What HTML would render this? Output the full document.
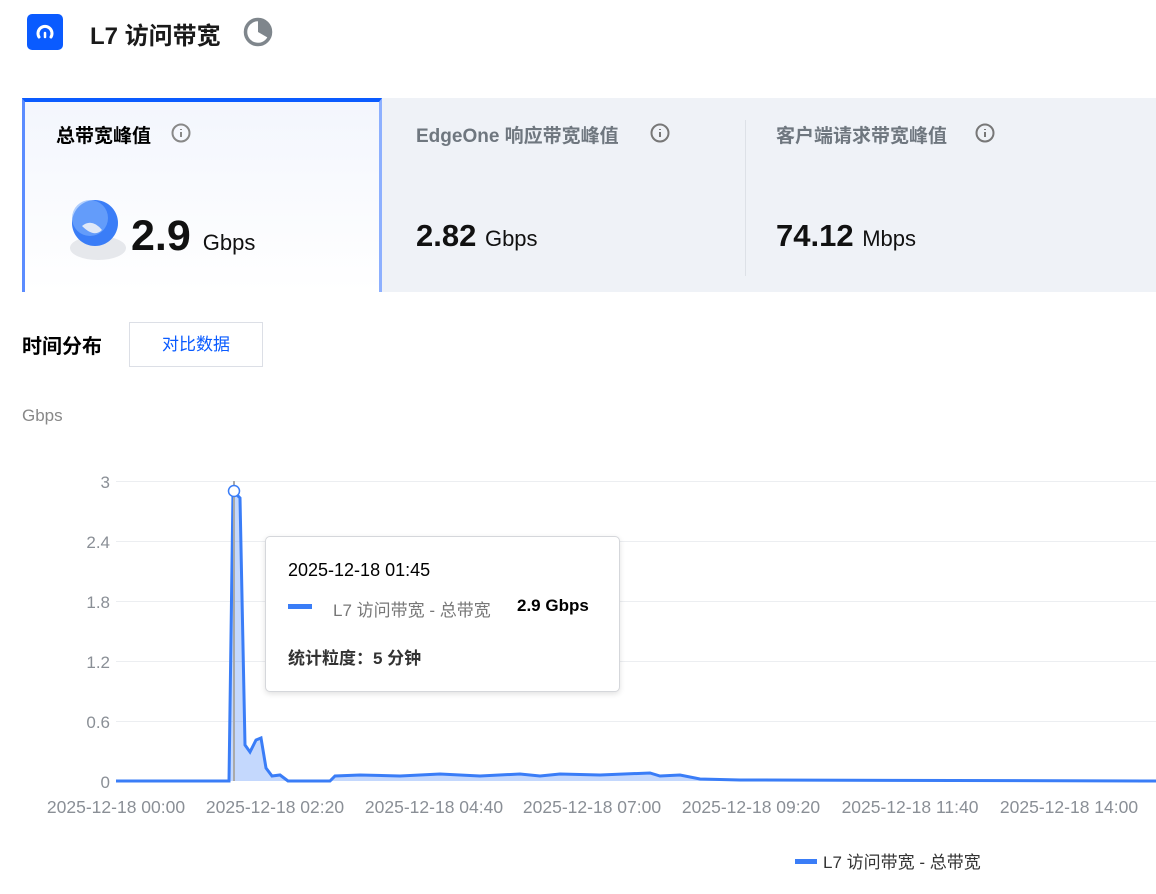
<!DOCTYPE html>
<html><head><meta charset="utf-8"><style>
body{margin:0;width:1156px;height:894px;background:#fff;font-family:"Liberation Sans","Noto Sans CJK SC",sans-serif;position:relative;overflow:hidden;color:#000}
.a{position:absolute}
</style></head><body>
<div class="a" style="left:27px;top:14px;width:36px;height:36px;background:#0a5bff;border-radius:5px"></div>
<svg class="a" style="left:27px;top:14px" width="36" height="36"><path d="M12 23 A7 7 0 1 1 24 23" fill="none" stroke="#fff" stroke-width="3" stroke-linecap="round"/><path d="M18 19 v4" stroke="#fff" stroke-width="2.5" stroke-linecap="round"/></svg>
<div class="a" style="left:90px;top:16px;font-size:24px;font-weight:bold;color:#1a1a1a">L7 访问带宽</div>
<svg class="a" style="left:242px;top:16px" width="32" height="32"><circle cx="16" cy="16" r="12.5" fill="none" stroke="#7f868c" stroke-width="3.5"/><path d="M16 2 A14 14 0 0 1 28.1 23 L16 16Z" fill="#7f868c"/></svg>

<div class="a" style="left:22px;top:98px;width:1134px;height:194px;background:#eff2f7"></div>
<div class="a" style="left:22px;top:98px;width:354px;height:190px;border:3px solid #0a5bff;border-top-width:4px;border-bottom:none;background:linear-gradient(#f3f6fd,#fff);border-left-color:#5b8cff;border-right-color:#8db0ff"></div>
<div class="a" style="left:56px;top:121px;font-size:19px;font-weight:bold">总带宽峰值</div>
<svg class="a" style="left:171px;top:123px" width="20" height="20"><circle cx="10" cy="10" r="8.5" fill="none" stroke="#888" stroke-width="2"/><path d="M10 9v5M10 6v1" stroke="#888" stroke-width="2"/></svg>
<svg class="a" style="left:60px;top:196px" width="75" height="70"><ellipse cx="38" cy="52" rx="28" ry="12" fill="#e6e8ec"/><circle cx="35" cy="27" r="23" fill="#3a7df7"/><circle cx="30" cy="22" r="18" fill="#7fb0fb" opacity=".6"/><path d="M22 30 q10 -8 20 4 q-8 8 -20 -4" fill="#dfe8f7"/></svg>
<div class="a" style="left:131px;top:212px;font-size:43px;font-weight:bold;color:#111">2.9 <span style="font-size:22px;font-weight:normal">Gbps</span></div>
<div class="a" style="left:416px;top:121px;font-size:19px;font-weight:bold;color:#6f777f">EdgeOne 响应带宽峰值</div>
<svg class="a" style="left:650px;top:123px" width="20" height="20"><circle cx="10" cy="10" r="8.5" fill="none" stroke="#777" stroke-width="2"/><path d="M10 9v5M10 6v1" stroke="#777" stroke-width="2"/></svg>
<div class="a" style="left:416px;top:218px;font-size:31px;font-weight:bold;color:#111">2.82 <span style="font-size:22px;font-weight:normal">Gbps</span></div>
<div class="a" style="left:745px;top:120px;width:1px;height:156px;background:#dde1e7"></div>
<div class="a" style="left:776px;top:121px;font-size:19px;font-weight:bold;color:#6f777f">客户端请求带宽峰值</div>
<svg class="a" style="left:975px;top:123px" width="20" height="20"><circle cx="10" cy="10" r="8.5" fill="none" stroke="#777" stroke-width="2"/><path d="M10 9v5M10 6v1" stroke="#777" stroke-width="2"/></svg>
<div class="a" style="left:776px;top:218px;font-size:31px;font-weight:bold;color:#111">74.12 <span style="font-size:22px;font-weight:normal">Mbps</span></div>

<div class="a" style="left:22px;top:330px;font-size:20px;font-weight:bold">时间分布</div>
<div class="a" style="left:129px;top:322px;width:132px;height:43px;border:1px solid #dcdfe6;color:#0a5bff;font-size:17px;line-height:43px;text-align:center">对比数据</div>
<div class="a" style="left:22px;top:406px;font-size:17px;color:#888">Gbps</div>

<svg class="a" style="left:0;top:0" width="1156" height="894">
<g stroke="#eceef1" stroke-width="1"><path d="M116 481.5H1156M116 541.5H1156M116 601.5H1156M116 661.5H1156M116 721.5H1156"/></g>
<g fill="#8a8f96" font-size="17" text-anchor="end" font-family="Liberation Sans,sans-serif"><text x="110" y="488">3</text><text x="110" y="548">2.4</text><text x="110" y="608">1.8</text><text x="110" y="668">1.2</text><text x="110" y="728">0.6</text><text x="110" y="788">0</text></g>
<g fill="#8a8f96" font-size="17.5" text-anchor="middle" font-family="Liberation Sans,sans-serif"><text x="116" y="813">2025-12-18 00:00</text><text x="275" y="813">2025-12-18 02:20</text><text x="434" y="813">2025-12-18 04:40</text><text x="592" y="813">2025-12-18 07:00</text><text x="751" y="813">2025-12-18 09:20</text><text x="910" y="813">2025-12-18 11:40</text><text x="1069" y="813">2025-12-18 14:00</text></g>
<path d="M116 781H229L233 491L240 498L245 745L250 752L256 740L261 738L266 768L272 776L280 775L288 781H330L335 776L360 775L400 776L440 774L480 776L520 774L540 776L560 774L600 775L650 773L660 776L680 775L700 779L740 780L1156 781Z" fill="#3a7df7" opacity=".3"/>
<path d="M116 781H229L233 491L240 498L245 745L250 752L256 740L261 738L266 768L272 776L280 775L288 781H330L335 776L360 775L400 776L440 774L480 776L520 774L540 776L560 774L600 775L650 773L660 776L680 775L700 779L740 780L1156 781" fill="none" stroke="#3a7df7" stroke-width="3"/>
<line x1="234" y1="481" x2="234" y2="781" stroke="#aaa" stroke-width="2"/>
<circle cx="234" cy="491" r="5.5" fill="#fff" stroke="#3a7df7" stroke-width="1.5"/>
<rect x="795" y="859" width="22" height="5" fill="#3a7df7"/>
<text x="823" y="868" font-size="17" fill="#333" font-family="Liberation Sans,Noto Sans CJK SC,sans-serif">L7 访问带宽 - 总带宽</text>
</svg>

<div class="a" style="left:265px;top:536px;width:353px;height:154px;background:#fff;border:1px solid #d5d7db;border-radius:5px;box-shadow:0 2px 6px rgba(0,0,0,.12)">
<div class="a" style="left:22px;top:23px;font-size:18px">2025-12-18 01:45</div>
<div class="a" style="left:22px;top:67px;width:24px;height:5px;background:#3a7df7"></div>
<div class="a" style="left:67px;top:59px;font-size:17px;color:#777">L7 访问带宽 - 总带宽</div>
<div class="a" style="left:251px;top:59px;font-size:17px;font-weight:bold">2.9 Gbps</div>
<div class="a" style="left:22px;top:107px;font-size:17px;font-weight:bold;color:#333">统计粒度：5 分钟</div>
</div>
</body></html>
